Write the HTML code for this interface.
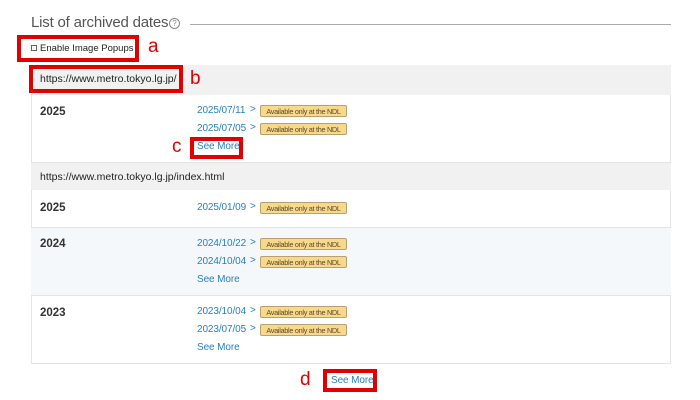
<!DOCTYPE html>
<html><head><meta charset="utf-8"><style>
*{margin:0;padding:0;box-sizing:border-box}
body{width:700px;height:400px;background:#fff;font-family:"Liberation Sans",sans-serif;position:relative;overflow:hidden;color:#333}
.a{position:absolute;white-space:nowrap}
.red{position:absolute;border:4px solid #e00000}
.lbl{position:absolute;color:#e00000;font-size:19px}
.blue{color:#2a7fc0;font-size:10px;letter-spacing:-0.1px}
.badge{position:absolute;white-space:nowrap;overflow:hidden;background:#f8d88a;border:1px solid #b8a070;border-radius:2px;font-size:7.3px;color:#5a4a2a;height:12px;line-height:11px;padding:0 2px;width:87px;letter-spacing:-0.3px;text-align:center}
.chev{position:absolute;color:#2a7fc0;font-size:10px}
.yr{position:absolute;left:40px;font-weight:bold;font-size:11.5px;color:#333}
</style></head><body>
<div class="a" style="left:31px;top:14px;font-size:15px;color:#555;letter-spacing:-0.2px">List of archived dates</div>
<div class="a" style="left:169px;top:18px;width:11px;height:11px;border:1px solid #888;border-radius:50%;font-size:8px;line-height:9px;text-align:center;color:#888">?</div>
<div class="a" style="left:190px;top:24px;width:481px;height:1px;background:#aaa"></div>
<div class="red" style="left:17px;top:35px;width:122px;height:27px"></div>
<div class="a" style="left:31px;top:45px;width:6px;height:6px;border:1px solid #666"></div>
<div class="a" style="left:40px;top:43px;font-size:9.5px;color:#222">Enable Image Popups</div>
<div class="lbl" style="left:148px;top:36px">a</div>
<div class="a" style="left:31px;top:65px;width:640px;height:299px;border:1px solid #e4e4e4"></div>
<div class="a" style="left:31px;top:65px;width:640px;height:30px;background:#f1f1f1"></div>
<div class="red" style="left:29px;top:65px;width:154px;height:28px"></div>
<div class="a" style="left:40px;top:73px;font-size:10.5px;color:#222">https://www.metro.tokyo.lg.jp/</div>
<div class="lbl" style="left:190px;top:68px">b</div>
<div class="yr" style="top:106px">2025</div>
<div class="a blue" style="left:197px;top:105px">2025/07/11</div><div class="chev" style="left:250px;top:104px">&gt;</div><div class="badge" style="left:260px;top:105px">Available only at the NDL</div>
<div class="a blue" style="left:197px;top:123px">2025/07/05</div><div class="chev" style="left:250px;top:122px">&gt;</div><div class="badge" style="left:260px;top:123px">Available only at the NDL</div>
<div class="red" style="left:190px;top:137px;width:53px;height:22px"></div>
<div class="a blue" style="left:197px;top:141px;font-size:10px">See More</div>
<div class="lbl" style="left:172px;top:136px">c</div>
<div class="a" style="left:31px;top:162px;width:640px;height:28px;background:#f1f1f1;border-top:1px solid #e4e4e4"></div>
<div class="a" style="left:40px;top:171px;font-size:10.5px;color:#222">https://www.metro.tokyo.lg.jp/index.html</div>
<div class="yr" style="top:202px">2025</div>
<div class="a blue" style="left:197px;top:202px">2025/01/09</div><div class="chev" style="left:250px;top:201px">&gt;</div><div class="badge" style="left:260px;top:202px">Available only at the NDL</div>
<div class="a" style="left:31px;top:227px;width:640px;height:69px;background:#f4f8fa;border-top:1px solid #e4e4e4;border-bottom:1px solid #e4e4e4"></div>
<div class="yr" style="top:238px">2024</div>
<div class="a blue" style="left:197px;top:238px">2024/10/22</div><div class="chev" style="left:250px;top:237px">&gt;</div><div class="badge" style="left:260px;top:238px">Available only at the NDL</div>
<div class="a blue" style="left:197px;top:256px">2024/10/04</div><div class="chev" style="left:250px;top:255px">&gt;</div><div class="badge" style="left:260px;top:256px">Available only at the NDL</div>
<div class="a blue" style="left:197px;top:274px;font-size:10px">See More</div>
<div class="yr" style="top:307px">2023</div>
<div class="a blue" style="left:197px;top:306px">2023/10/04</div><div class="chev" style="left:250px;top:305px">&gt;</div><div class="badge" style="left:260px;top:306px">Available only at the NDL</div>
<div class="a blue" style="left:197px;top:324px">2023/07/05</div><div class="chev" style="left:250px;top:323px">&gt;</div><div class="badge" style="left:260px;top:324px">Available only at the NDL</div>
<div class="a blue" style="left:197px;top:342px;font-size:10px">See More</div>
<div class="red" style="left:323px;top:369px;width:54px;height:23px"></div>
<div class="a blue" style="left:331px;top:375px;font-size:10px">See More</div>
<div class="lbl" style="left:300px;top:369px">d</div>
</body></html>
